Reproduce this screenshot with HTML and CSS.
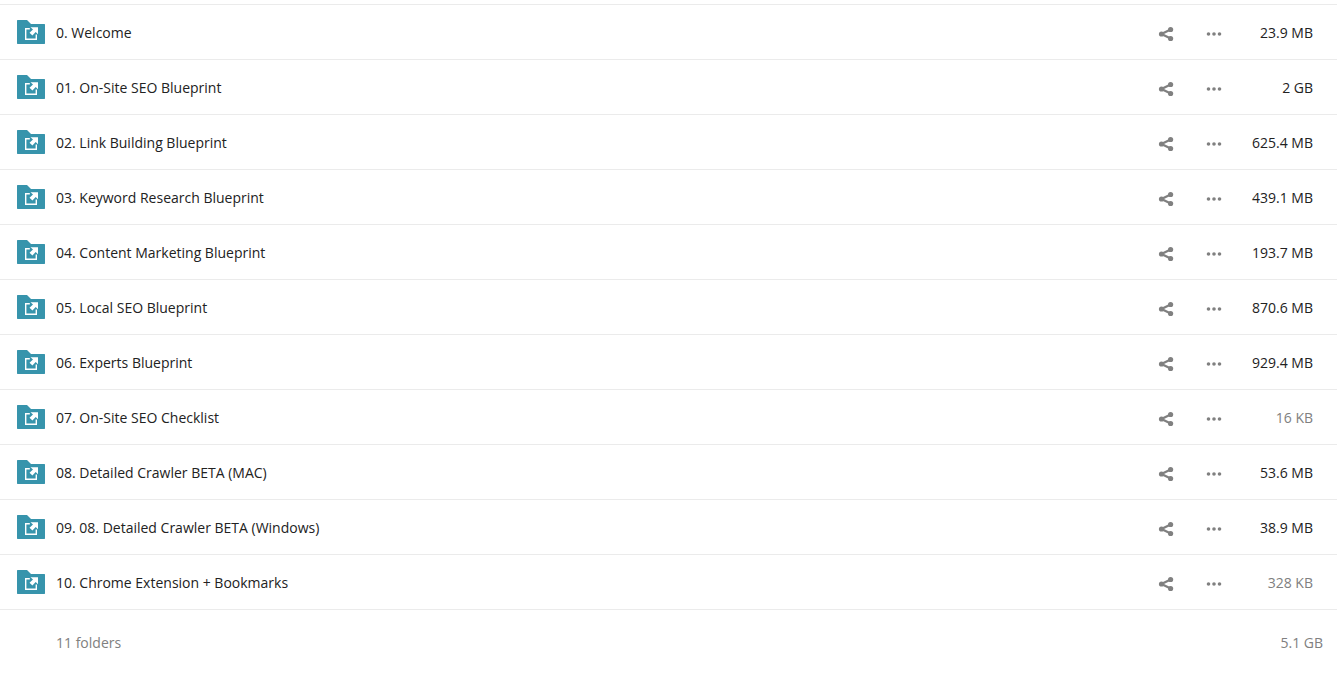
FILE: index.html
```html
<!DOCTYPE html>
<html lang="en">
<head>
<meta charset="utf-8">
<title>Files</title>
<link rel="stylesheet" href="styles.css">
</head>
<body>
<svg class="sprite" aria-hidden="true">
<symbol id="folder" viewBox="0 0 28 24"><path fill="#3794ac" d="M.5 0H10l4 4h13.500l.5.500v19l-.5.500H.5l-.5-.5V.5z"/><path fill="none" stroke="#fff" stroke-width="1.400" d="M12.800 8.700H8.700v10.600h10.600V14.500"/><path fill="#fff" d="M13.500 7.200H21v7l-2.300-2.200-3.300 3.500-2.900-2.700 3.500-3.300z"/></symbol>
<symbol id="share" viewBox="0 0 16 16"><path fill="none" stroke="#808080" stroke-width="2.300" d="M12.600 3.500L3.500 8l9.100 4.500"/><g fill="#808080"><circle cx="3.500" cy="8" r="2.600"/><circle cx="12.600" cy="3.500" r="2.600"/><circle cx="12.600" cy="12.500" r="2.600"/></g></symbol>
<symbol id="dots" viewBox="0 0 16 16"><g fill="#808080"><circle cx="2.500" cy="8" r="1.800"/><circle cx="8" cy="8" r="1.800"/><circle cx="13.500" cy="8" r="1.800"/></g></symbol>
</svg>
<table class="files"><tbody id="rows"></tbody>
<tfoot><tr><td></td><td>11 folders</td><td></td><td></td><td class="total">5.1 GB</td></tr></tfoot></table>
<script src="files.js"></script>
</body>
</html>
```
FILE: files.js
```js
const files = [
  ["0. Welcome", "23.9 MB"],
  ["01. On-Site SEO Blueprint", "2 GB"],
  ["02. Link Building Blueprint", "625.4 MB"],
  ["03. Keyword Research Blueprint", "439.1 MB"],
  ["04. Content Marketing Blueprint", "193.7 MB"],
  ["05. Local SEO Blueprint", "870.6 MB"],
  ["06. Experts Blueprint", "929.4 MB"],
  ["07. On-Site SEO Checklist", "16 KB"],
  ["08. Detailed Crawler BETA (MAC)", "53.6 MB"],
  ["09. 08. Detailed Crawler BETA (Windows)", "38.9 MB"],
  ["10. Chrome Extension + Bookmarks", "328 KB"]
];
document.getElementById("rows").innerHTML = files.map(([name, size]) => `
<tr>
<td class="thumb"><svg class="folder" aria-hidden="true"><use href="#folder"/></svg></td>
<td class="name"><a href="#">${name}</a></td>
<td class="action"><button aria-label="Share ${name}"><svg class="icon"><use href="#share"/></svg></button></td>
<td class="action"><button aria-label="Actions for ${name}"><svg class="icon"><use href="#dots"/></svg></button></td>
<td class="size${size.endsWith("KB") ? " small" : ""}">${size}</td>
</tr>`).join("");
```
FILE: styles.css
```css
body { margin: 0; background: #fff; color: #222; font: 14px/20px "Open Sans", "Noto Sans", sans-serif; }
.sprite { position: absolute; width: 0; height: 0; }
.files { width: 100%; margin-top: 4px; border-collapse: separate; border-spacing: 0; }
.files td { height: 52px; padding: 2px 0 0; border-top: 1px solid #ebebeb; }
.files .thumb { width: 39px; height: 54px; padding: 0 0 0 17px; }
.folder { display: block; width: 28px; height: 24px; }
.name a { color: inherit; text-decoration: none; }
.files .action { width: 48px; height: 50px; padding-top: 4px; }
.action button { display: flex; align-items: center; justify-content: center; width: 48px; height: 44px; padding: 0; border: 0; background: none; cursor: pointer; }
.icon { width: 16px; height: 16px; }
.files .size { width: 75px; padding-right: 24px; text-align: right; }
.files .small { color: #808080; }
.files tfoot td { height: 66px; padding-top: 0; color: #808080; }
.files .total { padding-right: 14px; text-align: right; }
```
